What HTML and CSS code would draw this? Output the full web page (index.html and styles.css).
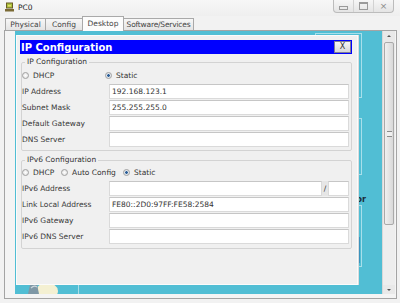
FILE: index.html
```html
<!DOCTYPE html>
<html>

<head>
  <title>PC0</title>
  <link rel="stylesheet" href="styles.css">
</head>

<body>
  <div id="window">
    <div class="titlebar">
      <svg class="appicon" width="10" height="10" viewBox="0 0 10 10">
        <rect x="1" y="0.5" width="7" height="6" fill="#6b5a25" />
        <rect x="2" y="1.5" width="5" height="4" fill="#a8c43c" />
        <rect x="3" y="3" width="3" height="1.5" fill="#e8d86a" />
        <rect x="0" y="7" width="9" height="2.5" fill="#7a6a34" />
      </svg>
      <span class="wintitle">PC0</span>
      <div class="controls">
        <span class="ctl"><span class="min"></span></span>
        <span class="ctl"><span class="max"></span></span>
        <span class="ctl close">&#x2A2F;</span>
      </div>
    </div>

    <div class="tabs">
      <div class="tab t-phys">Physical</div>
      <div class="tab t-conf">Config</div>
      <div class="tab t-desk active">Desktop</div>
      <div class="tab t-soft">Software/Services</div>
    </div>

    <div class="pane">
      <div class="desktop">
        <!-- desktop icons behind the dialog -->
        <div class="frame" style="top:2px;height:63px"></div>
        <div class="frame" style="top:87px;height:55px"></div>
        <div class="frame" style="top:174px;height:60px"></div>
        <div class="blueicon"></div>
        <div class="iconlabel">Text Editor</div>
        <svg class="deskicon" width="34" height="12" viewBox="0 0 34 12">
          <ellipse cx="22" cy="9" rx="11" ry="8" fill="#f4f0d2" />
          <path d="M3 12 L5 3 Q8 0 12 2 L14 12 Z" fill="#7f98a6" />
          <path d="M6 6 Q9 3 12 5" stroke="#c9d6dc" stroke-width="1.2" fill="none" />
        </svg>
        <div class="vline"></div>

        <div class="dialog">
          <div class="dlgtitle">
            <span>IP Configuration</span>
            <span class="xbtn">X</span>
          </div>

          <fieldset class="group">
            <legend>IP Configuration</legend>
            <div class="radios">
              <span class="opt" style="width:83px"><span class="radio"></span>DHCP</span>
              <span class="opt"><span class="radio on"></span>Static</span>
            </div>
            <div class="row"><span class="lbl">IP Address</span><span class="field">192.168.123.1</span></div>
            <div class="row"><span class="lbl">Subnet Mask</span><span class="field">255.255.255.0</span></div>
            <div class="row"><span class="lbl">Default Gateway</span><span class="field"></span></div>
            <div class="row"><span class="lbl">DNS Server</span><span class="field"></span></div>
          </fieldset>

          <fieldset class="group v6">
            <legend>IPv6 Configuration</legend>
            <div class="radios">
              <span class="opt" style="width:39px"><span class="radio"></span>DHCP</span>
              <span class="opt" style="width:62px"><span class="radio"></span>Auto Config</span>
              <span class="opt"><span class="radio on"></span>Static</span>
            </div>
            <div class="row"><span class="lbl">IPv6 Address</span><span class="field"></span><span class="slash">/</span><span class="field prefix"></span></div>
            <div class="row"><span class="lbl">Link Local Address</span><span class="field">FE80::2D0:97FF:FE58:2584</span></div>
            <div class="row"><span class="lbl">IPv6 Gateway</span><span class="field"></span></div>
            <div class="row"><span class="lbl">IPv6 DNS Server</span><span class="field"></span></div>
          </fieldset>
        </div>
      </div>

      <div class="scrollbar">
        <div class="arrow up"></div>
        <div class="thumb"><span class="grip"></span></div>
        <div class="track"></div>
        <div class="arrow down"></div>
      </div>
    </div>
  </div>
</body>

</html>
```

FILE: styles.css
```css
body {
  margin: 0;
  background: #f0f0f0;
  font-family: "DejaVu Sans", sans-serif;
  font-size: 7.5px;
  color: #333;
}

#window {
  width: 400px;
  height: 303px;
  display: flex;
  flex-direction: column;
  background: #f2f2f2;
}

.titlebar {
  height: 16px;
  display: flex;
  align-items: center;
  padding-left: 5px;
  background: linear-gradient(#f7f7f7, #efefef);
}

.appicon {
  margin-right: 3px;
  margin-top: -2px;
}

.wintitle {
  color: #222;
  margin-top: -2px;
}

.controls {
  margin-left: auto;
  margin-right: 6px;
  align-self: flex-start;
  display: flex;
  height: 12px;
  border: 1px solid #bcbcbc;
  border-top: none;
  border-radius: 0 0 4px 4px;
  background: linear-gradient(#f6f6f6, #e4e4e4);
}

.ctl {
  width: 19px;
  display: flex;
  align-items: center;
  justify-content: center;
  border-right: 1px solid #d2d2d2;
}

.ctl.close {
  border-right: none;
  color: #8a8a8a;
  font-size: 9px;
}

.min {
  width: 7px;
  height: 2px;
  border: 1px solid #9a9a9a;
  margin-top: 3px;
}

.max {
  width: 7px;
  height: 5px;
  border: 1px solid #9a9a9a;
  border-top-width: 2px;
}

.tabs {
  height: 14px;
  display: flex;
  align-items: flex-end;
  padding-left: 5px;
}

.tab {
  box-sizing: border-box;
  height: 12px;
  line-height: 11px;
  text-align: center;
  white-space: nowrap;
  border: 1px solid #a9a9a9;
  border-bottom: none;
  margin-right: -1px;
  background: linear-gradient(#f7f7f7, #e4e4e4);
  color: #444;
}

.t-phys { width: 41px; }
.t-conf { width: 38px; }
.t-desk { width: 42px; }
.t-soft { width: 71px; letter-spacing: -0.2px; }

.tab.active {
  height: 15px;
  line-height: 14px;
  margin-bottom: -1px;
  background: #fcfcfc;
  position: relative;
  z-index: 1;
}

.pane {
  flex: 0 0 269px;
  box-sizing: border-box;
  margin: 0 3px 0 4px;
  border: 1px solid #a4a4a4;
  padding: 0 1px 4px 10px;
  display: flex;
  background: #f4f4f4;
}

.desktop {
  flex: 0 0 367px;
  position: relative;
  overflow: hidden;
  background: #51bed4;
}

.frame {
  position: absolute;
  left: 300px;
  width: 45px;
  border: 1px solid rgba(255, 255, 255, 0.5);
}

.blueicon {
  position: absolute;
  left: 338px;
  top: 206px;
  width: 7px;
  height: 26px;
  background: #3b93bd;
}

.iconlabel {
  position: absolute;
  right: 16px;
  top: 164px;
  font-weight: bold;
  font-size: 8px;
  color: #1b2b38;
}

.deskicon {
  position: absolute;
  left: 10px;
  top: 251px;
}

.vline {
  position: absolute;
  left: 63px;
  top: 254px;
  width: 1px;
  height: 10px;
  background: #a9dde8;
}

.dialog {
  position: relative;
  z-index: 1;
  box-sizing: border-box;
  width: 342px;
  height: 250px;
  margin: 4px 0 0 1px;
  padding: 4px 5px 0 3px;
  background: #f0f0f0;
  border: 1px solid #fbfbfb;
  box-shadow: 1px 0 0 #dcdcdc;
}

.dlgtitle {
  height: 14px;
  display: flex;
  align-items: center;
  justify-content: space-between;
  padding-left: 1px;
  background: #0000ff;
  color: #fff;
  font-size: 10px;
  font-weight: bold;
}

.xbtn {
  width: 15px;
  height: 10px;
  margin-right: 1px;
  border: 1px solid #7d7d95;
  background: linear-gradient(#f6f6f6, #d8d8d8);
  color: #333;
  font-size: 8px;
  font-weight: normal;
  text-align: center;
  line-height: 10px;
}

.group {
  margin: 3px 0 0 1px;
  border: 1px solid #d3d3d3;
  border-radius: 2px;
  padding: 1px 2px 3px 0;
}

.group legend {
  line-height: 10px;
  padding: 0 2px;
  margin-left: 3px;
  color: #333;
}

.group.v6 {
  margin-top: 4px;
  padding-top: 0;
  padding-bottom: 4px;
}

.radios {
  height: 15px;
  display: flex;
  align-items: center;
}

.opt {
  display: flex;
  align-items: center;
}

.radio {
  box-sizing: border-box;
  width: 7px;
  height: 7px;
  margin-right: 4px;
  border-radius: 50%;
  border: 1px solid #a0a0a0;
  background: radial-gradient(#ffffff, #dcdcdc);
}

.radio.on {
  background: radial-gradient(#2a5d96 30%, #dfe6ee 45%, #e8e8e8);
}

.row {
  height: 15px;
  margin-top: 1px;
  display: flex;
  align-items: center;
}

.lbl {
  flex: 0 0 87px;
  color: #383838;
}

.field {
  flex: 1;
  box-sizing: border-box;
  height: 15px;
  line-height: 13px;
  padding-left: 2px;
  background: #fff;
  border: 1px solid #dadada;
  border-top-color: #c6c6c6;
  color: #333;
}

.slash {
  width: 6px;
  height: 15px;
  line-height: 15px;
  text-align: center;
  background: #e6e6e6;
}

.field.prefix {
  flex: 0 0 21px;
}

.scrollbar {
  flex: 0 0 13px;
  display: flex;
  flex-direction: column;
  background: #e9e9e9;
  border-left: 1px solid #d8d8d8;
  box-sizing: border-box;
}

.arrow {
  height: 9px;
  display: flex;
  justify-content: center;
  align-items: center;
}

.arrow::after {
  content: "";
  border-left: 2px solid transparent;
  border-right: 2px solid transparent;
}

.arrow.up::after {
  border-bottom: 2px solid #555;
}

.arrow.down::after {
  border-top: 2px solid #555;
}

.thumb {
  height: 181px;
  margin: 2px 1px 0 1px;
  border: 1px solid #a9a9a9;
  border-radius: 2px;
  background: linear-gradient(90deg, #f0f0f0, #d8d8d8);
  display: flex;
  align-items: center;
  justify-content: center;
}

.grip {
  width: 5px;
  height: 4px;
  border-top: 1px solid #8c8c8c;
  border-bottom: 1px solid #8c8c8c;
  background: linear-gradient(#f0f0f0 40%, #8c8c8c 40%, #8c8c8c 60%, #f0f0f0 60%);
}

.track {
  flex: 1;
  background: #eeeeee;
}
```
